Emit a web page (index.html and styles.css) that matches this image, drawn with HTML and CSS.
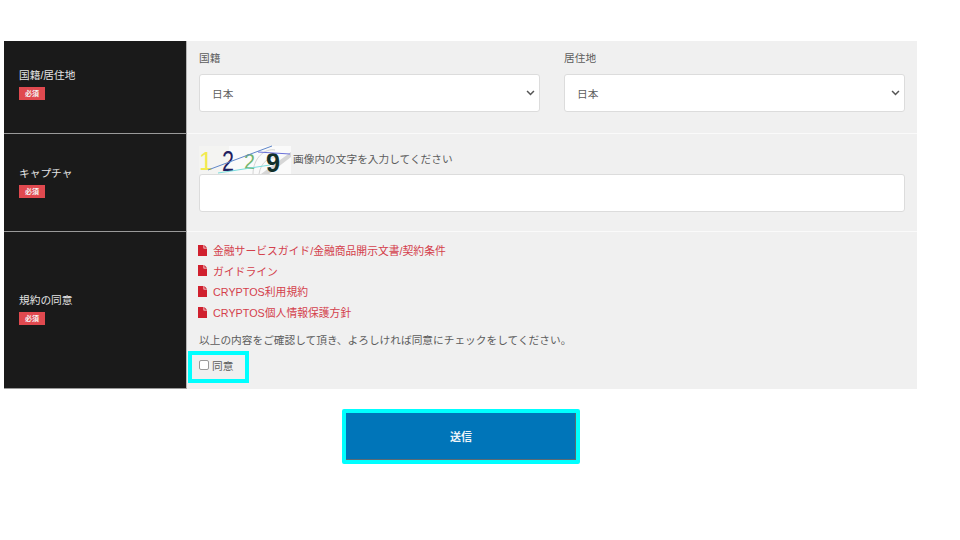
FILE: index.html
```html
<!DOCTYPE html>
<html lang="ja">
<head>
  <meta charset="UTF-8" />
  <title>送信フォーム</title>
  <link rel="stylesheet" href="styles.css">
</head>
<body>
  <form class="form">
    <div class="row row-country">
      <div class="head">
        <span>国籍/居住地</span>
        <span class="badge">必須</span>
      </div>
      <div class="body country-fields">
        <div class="field">
          <label class="field-label">国籍</label>
          <div class="select-box">
            <span>日本</span>
            <svg class="chevron" viewBox="0 0 10 7" width="9" height="6"><path d="M1 1.2 5 5.2 9 1.2" fill="none" stroke="#555" stroke-width="1.8"/></svg>
          </div>
        </div>
        <div class="field">
          <label class="field-label">居住地</label>
          <div class="select-box">
            <span>日本</span>
            <svg class="chevron" viewBox="0 0 10 7" width="9" height="6"><path d="M1 1.2 5 5.2 9 1.2" fill="none" stroke="#555" stroke-width="1.8"/></svg>
          </div>
        </div>
      </div>
    </div>

    <div class="row row-captcha">
      <div class="head">
        <span>キャプチャ</span>
        <span class="badge">必須</span>
      </div>
      <div class="body">
        <div class="captcha-line">
          <svg class="captcha" viewBox="0 0 92 28" width="92" height="28">
            <rect width="92" height="28" fill="#f4f4f2"/>
            <path d="M30 0H92V28H30Z" fill="#fafafa"/>
            <path d="M54 28 C54 12 66 2 76 4 M60 28 C62 16 70 10 80 12" fill="none" stroke="#d4d4d4" stroke-width="1"/>
            <path d="M70 28 92 11V6L62 28Z" fill="#d6d6d6"/>
            <text x="0" y="24" class="digit digit-one">1</text>
            <text x="23" y="25" class="digit digit-two" textLength="12" lengthAdjust="spacingAndGlyphs">2</text>
            <text x="45" y="23" class="digit digit-three" textLength="11" lengthAdjust="spacingAndGlyphs">2</text>
            <text x="67" y="26" class="digit digit-four" textLength="14" lengthAdjust="spacingAndGlyphs">9</text>
            <path d="M9 24 73 0" stroke="#5f86c8" stroke-width="1"/>
            <path d="M59 6 91 8" stroke="#6a70d8" stroke-width="1"/>
            <path d="M19 27 71 19" stroke="#7adcdc" stroke-width="1"/>
          </svg>
          <span class="captcha-text">画像内の文字を入力してください</span>
        </div>
        <div class="text-input"></div>
      </div>
    </div>

    <div class="row row-terms">
      <div class="head">
        <span>規約の同意</span>
        <span class="badge">必須</span>
      </div>
      <div class="body">
        <ul class="doc-list">
          <li><svg class="doc-icon" viewBox="0 0 9 11" width="9" height="11"><path d="M0 0H5.5V3.5H9V11H0ZM6.3 0 9 2.7H6.3Z" fill="#d0202e"/></svg><a>金融サービスガイド/金融商品開示文書/契約条件</a></li>
          <li><svg class="doc-icon" viewBox="0 0 9 11" width="9" height="11"><path d="M0 0H5.5V3.5H9V11H0ZM6.3 0 9 2.7H6.3Z" fill="#d0202e"/></svg><a>ガイドライン</a></li>
          <li><svg class="doc-icon" viewBox="0 0 9 11" width="9" height="11"><path d="M0 0H5.5V3.5H9V11H0ZM6.3 0 9 2.7H6.3Z" fill="#d0202e"/></svg><a>CRYPTOS利用規約</a></li>
          <li><svg class="doc-icon" viewBox="0 0 9 11" width="9" height="11"><path d="M0 0H5.5V3.5H9V11H0ZM6.3 0 9 2.7H6.3Z" fill="#d0202e"/></svg><a>CRYPTOS個人情報保護方針</a></li>
        </ul>
        <p class="terms-note">以上の内容をご確認して頂き、よろしければ同意にチェックをしてください。</p>
        <label class="agree"><span class="check"></span>同意</label>
      </div>
    </div>

    <div class="actions">
      <button type="button" class="submit">送信</button>
    </div>
  </form>
</body>
</html>
```

FILE: styles.css
```css
html, body {
  margin: 0;
  background-color: #ffffff;
}

body {
  font-family: "Liberation Sans", "Noto Sans CJK JP", sans-serif;
  font-size: 10.7px;
  color: #5c5c5c;
  padding: 41px 0 0 4px;
}

.form {
  width: 914px;
}

.row {
  display: grid;
  grid-template-columns: 183px 730px;
  width: 913px;
  background-color: #f0f0f0;
  border-bottom: 1px solid #fafafa;
}

.row-country {
  height: 92px;
}

.row-captcha {
  height: 97px;
}

.row-terms {
  height: 157px;
  border-bottom: none;
}

.head {
  background-color: #1a1a1a;
  color: #e4e4e4;
  padding-left: 15px;
  display: flex;
  flex-direction: column;
  justify-content: center;
  align-items: flex-start;
  gap: 5px;
  border-right: 1px solid #b5b5b5;
  border-bottom: 1px solid #9a9a9a;
  margin-bottom: -1px;
}

.row-country .head {
  padding-bottom: 7px;
}

.row-captcha .head {
  padding-bottom: 3px;
}

.row-terms .head {
  margin-bottom: 0;
  padding-bottom: 3px;
}

.badge {
  background-color: #e0494f;
  color: #f4f4f4;
  font-size: 7px;
  font-weight: bold;
  line-height: 13px;
  width: 26px;
  text-align: center;
}

.body {
  padding: 0 12px;
  min-width: 0;
}

.country-fields {
  display: grid;
  grid-template-columns: 341px 341px;
  column-gap: 24px;
  align-items: start;
  padding-top: 10px;
}

.field-label {
  display: block;
  line-height: 15px;
  margin-bottom: 8px;
}

.select-box {
  height: 36px;
  background-color: #ffffff;
  border: 1px solid #dcdcdc;
  border-radius: 3px;
  display: flex;
  align-items: center;
  justify-content: space-between;
  padding: 0 4px 0 12px;
}

.row-captcha .body {
  padding-top: 12px;
}

.captcha-line {
  display: flex;
  align-items: center;
  gap: 2px;
  height: 28px;
}

.captcha {
  display: block;
  overflow: visible;
}

.digit {
  font-family: "Liberation Sans", sans-serif;
}

.digit-one {
  font-size: 25px;
  fill: #f2ea50;
}

.digit-two {
  font-size: 29px;
  fill: #1f2060;
}

.digit-three {
  font-size: 22px;
  fill: #74b56e;
}

.digit-four {
  font-size: 27px;
  font-weight: bold;
  fill: #12302a;
}

.captcha-text {
  padding-bottom: 4px;
}

.text-input {
  height: 36px;
  background-color: #ffffff;
  border: 1px solid #dcdcdc;
  border-radius: 3px;
}

.row-terms .body {
  padding-top: 8px;
}

.doc-list {
  list-style: none;
  margin: 0 0 0 -1px;
  padding: 0;
}

.doc-list li {
  display: flex;
  align-items: center;
  gap: 6px;
  height: 20.6px;
}

.doc-list a {
  color: #d4404c;
  font-size: 10.8px;
}

.terms-note {
  margin: 10px 0 0;
  line-height: 16px;
}

.agree {
  display: inline-flex;
  align-items: center;
  gap: 3px;
  height: 20px;
  padding: 0 12px 4px 7px;
  margin: 7px 0 0 -7px;
  outline: 4px solid #00ffff;
}

.check {
  width: 8px;
  height: 8px;
  background-color: #ffffff;
  border: 1px solid #999999;
  border-radius: 2px;
}

.actions {
  display: flex;
  justify-content: center;
  padding: 20px 0 0 0;
}

.submit {
  width: 238px;
  height: 55px;
  box-sizing: border-box;
  background-color: #0075b9;
  color: #eef4f8;
  font-family: inherit;
  font-size: 11px;
  font-weight: bold;
  border: 4px solid #00ffff;
  box-shadow: inset -1px -1px 0 #5a6a74;
  border-radius: 2px;
  padding: 0 0 2px;
}
```
